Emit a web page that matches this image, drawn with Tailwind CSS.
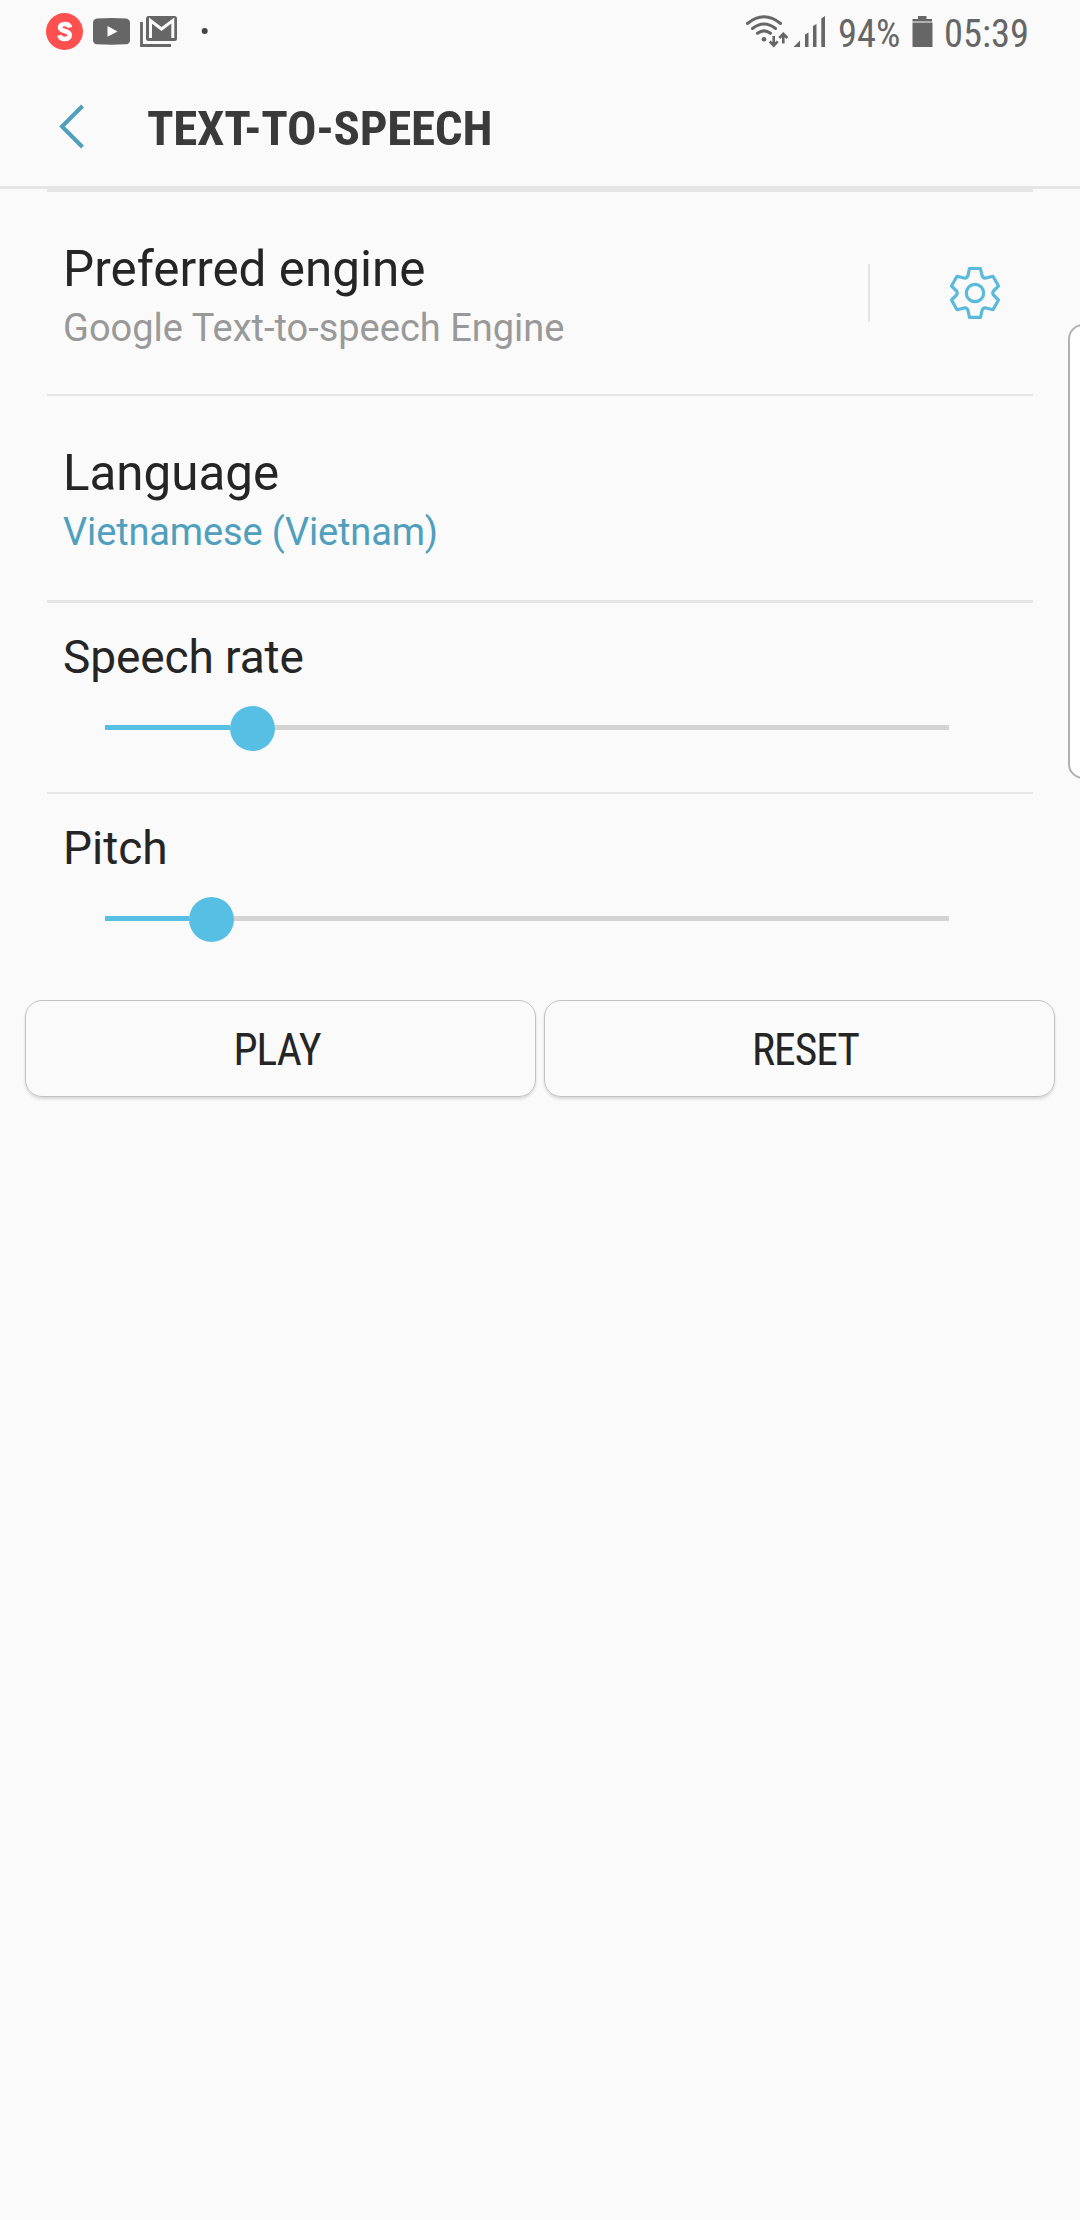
<!DOCTYPE html>
<html lang="en">
<head>
<meta charset="utf-8">
<title>Text-to-speech</title>
<script src="https://cdn.jsdelivr.net/npm/@tailwindcss/browser@4"></script>
</head>
<body class="bg-[#fafafa] font-['Roboto',sans-serif] text-[#252525]">
<div class="relative h-[2220px] w-[1080px] overflow-hidden">
  <!-- Status bar -->
  <div class="flex h-[64px] items-center justify-between pl-[46px] pr-[52px] text-[#666]">
    <div class="flex h-[64px] items-center">
      <svg class="h-[64px] w-[170px]" viewBox="46 0 170 64">
        <circle cx="64.5" cy="31.5" r="18.5" fill="#ff5050"/>
        <path d="M70 27.5C69.5 25 67.500 24 64.800 24C61.600 24 60 25.600 60 27.500C60 32 69.800 29.800 69.800 35C69.800 37.500 67.800 39 64.800 39C61.800 39 59.900 37.700 59.400 35.200" fill="none" stroke="#fff" stroke-width="4.600"/>
        <path d="M97 18.500Q111.500 17.700 126 18.500Q130 19 130 23V40Q130 44 126 44.300Q111.500 45 97 44.300Q93 44 93 40V23Q93 19 97 18.500Z" fill="#666"/>
        <path d="M107.500 26V36.800L117.500 31.400Z" fill="#fff"/>
        <path d="M141.500 22V45.500H171" fill="none" stroke="#666" stroke-width="2.800"/>
        <rect x="146" y="16" width="31" height="25" rx="2.500" fill="#666"/>
        <path d="M150.500 38V20.500L161.500 29L172.800 20.500V38" fill="none" stroke="#fafafa" stroke-width="3"/>
        <circle cx="204.700" cy="31" r="3" fill="#444"/>
      </svg>
    </div>
    <div class="flex h-[64px] items-center">
      <svg class="h-[64px] w-[82px] shrink-0" viewBox="745 0 82 64" fill="none" stroke="#666">
        <g stroke-width="3" stroke-linecap="round">
          <path d="M747.500 23.500Q764 10 780.500 23.500"/>
          <path d="M752.500 28.500Q764 19.500 775.500 28.500"/>
          <path d="M757.500 33.300Q764 28.500 770.500 33.300"/>
        </g>
        <circle cx="764" cy="39.300" r="2.300" fill="#666" stroke="none"/>
        <path d="M773.700 36V45M769.700 41.300L773.700 45.500L777.700 41.300M783.300 43.500V34.500M779.300 38L783.300 33.800L787.300 38" stroke-width="2.600"/>
        <path d="M793.500 47L800 40.500V47ZM805 47V34.500L808.500 32.500V47ZM813 47V26L816.500 24V47ZM821.300 47V18.500L825 16V47Z" fill="#666" stroke="none"/>
      </svg>
      <span class="ml-[11px] block w-[62px] whitespace-nowrap pt-[3px] text-[38.5px] leading-[64px] font-stretch-condensed">94%</span>
      <svg class="ml-[11px] h-[64px] w-[22px] shrink-0" viewBox="910 0 22 64"><path d="M917 16h8.500v3h5.500v2.500h-19.500v-2.500h5.500zM911.500 22.500h20v24.500h-20z" fill="#666"/></svg>
      <span class="ml-[11px] block w-[84px] whitespace-nowrap pt-[3px] text-[38.5px] leading-[64px] font-stretch-condensed">05:39</span>
    </div>
  </div>
  <!-- App bar -->
  <header class="flex h-[125px] items-center border-b-[3px] border-[#e5e5e5] pl-[58px]">
    <svg class="mt-[2px] h-[46px] w-[28px]" viewBox="0 0 28 46"><path d="M24.500 3L4 23.500L24.500 44" fill="none" stroke="#4f9fbd" stroke-width="4"/></svg>
    <h1 class="ml-[61px] whitespace-nowrap pt-[7px] text-[49px] leading-[58px] font-bold tracking-[-0.3px] font-stretch-condensed text-[#3a3a3a]">TEXT-TO-SPEECH</h1>
  </header>
  <!-- Settings list -->
  <main class="mx-[47px]">
    <section class="flex h-[207px] items-center justify-between border-y-[2px] border-t-[3px] border-[#e5e5e5] pl-[16px] pr-[32px]">
      <div class="pt-[11px]">
        <h2 class="text-[49.4px] leading-[59px]">Preferred engine</h2>
        <p class="text-[38px] leading-[59px] text-[#999]">Google Text-to-speech Engine</p>
      </div>
      <div class="flex items-center">
        <span class="mr-[79px] h-[58px] w-[2px] bg-[#e5e5e5]"></span>
        <svg class="h-[54px] w-[52px]" viewBox="949 266 52 54" fill="none" stroke="#5bbadb" stroke-width="3.200" stroke-linejoin="round">
          <path d="M969.500 268.500H980.500L982 275.500Q983 278.500 986 278L993 276.300L998.500 286L993.500 291Q992 293 993.500 295L998.500 300L993 309.700L986 308Q983 307.500 982 310.500L980.500 317.300H969.500L968 310.500Q967 307.500 964 308L957 309.700L951.500 300L956.500 295Q958 293 956.500 291L951.500 286L957 276.300L964 278Q967 278.500 968 275.500Z"/>
          <circle cx="975" cy="293" r="8.700"/>
        </svg>
      </div>
    </section>
    <section class="flex h-[207px] flex-col justify-center border-b-[3px] border-[#e5e5e5] pl-[16px] pt-[9px]">
      <h2 class="text-[49.3px] leading-[59px]">Language</h2>
      <p class="text-[38px] leading-[59px] tracking-[-0.15px] text-[#4f9fbd]">Vietnamese (Vietnam)</p>
    </section>
    <section class="h-[191px] border-b-[2px] border-[#e5e5e5] pl-[16px] pt-[26px]">
      <h2 class="text-[46px] leading-[56px] tracking-[-0.1px]">Speech rate</h2>
      <div class="mt-[21px] ml-[42px] flex h-[45px] w-[844px] items-center">
        <span class="-mt-[2px] h-[5px] w-[125px] bg-[#58bfe4]"></span><span class="size-[45px] rounded-full bg-[#58bfe4]"></span><span class="-mt-[2px] h-[5px] flex-1 bg-[#d3d3d3]"></span>
      </div>
    </section>
    <section class="h-[206px] pl-[16px] pt-[26px]">
      <h2 class="text-[46px] leading-[56px]">Pitch</h2>
      <div class="mt-[21px] ml-[42px] flex h-[45px] w-[844px] items-center">
        <span class="-mt-[2px] h-[5px] w-[84px] bg-[#58bfe4]"></span><span class="size-[45px] rounded-full bg-[#58bfe4]"></span><span class="-mt-[2px] h-[5px] flex-1 bg-[#d3d3d3]"></span>
      </div>
    </section>
  </main>
  <div class="flex gap-[8px] px-[25px] text-[43.5px] tracking-[-1px] font-stretch-condensed">
    <button class="h-[97px] w-[511px] rounded-[17px] border border-[#c2c2c2] pt-[5px] pr-[7px] shadow-[0_2px_3px_rgba(0,0,0,0.14)]">PLAY</button>
    <button class="h-[97px] w-[511px] rounded-[17px] border border-[#c2c2c2] pt-[5px] pl-[12px] shadow-[0_2px_3px_rgba(0,0,0,0.14)]">RESET</button>
  </div>
  <!-- Edge panel handle -->
  <div class="absolute top-[324px] left-[1068px] h-[455px] w-[30px] rounded-[17px] border-2 border-[#b0b0b0] bg-white"></div>
</div>
</body>
</html>
